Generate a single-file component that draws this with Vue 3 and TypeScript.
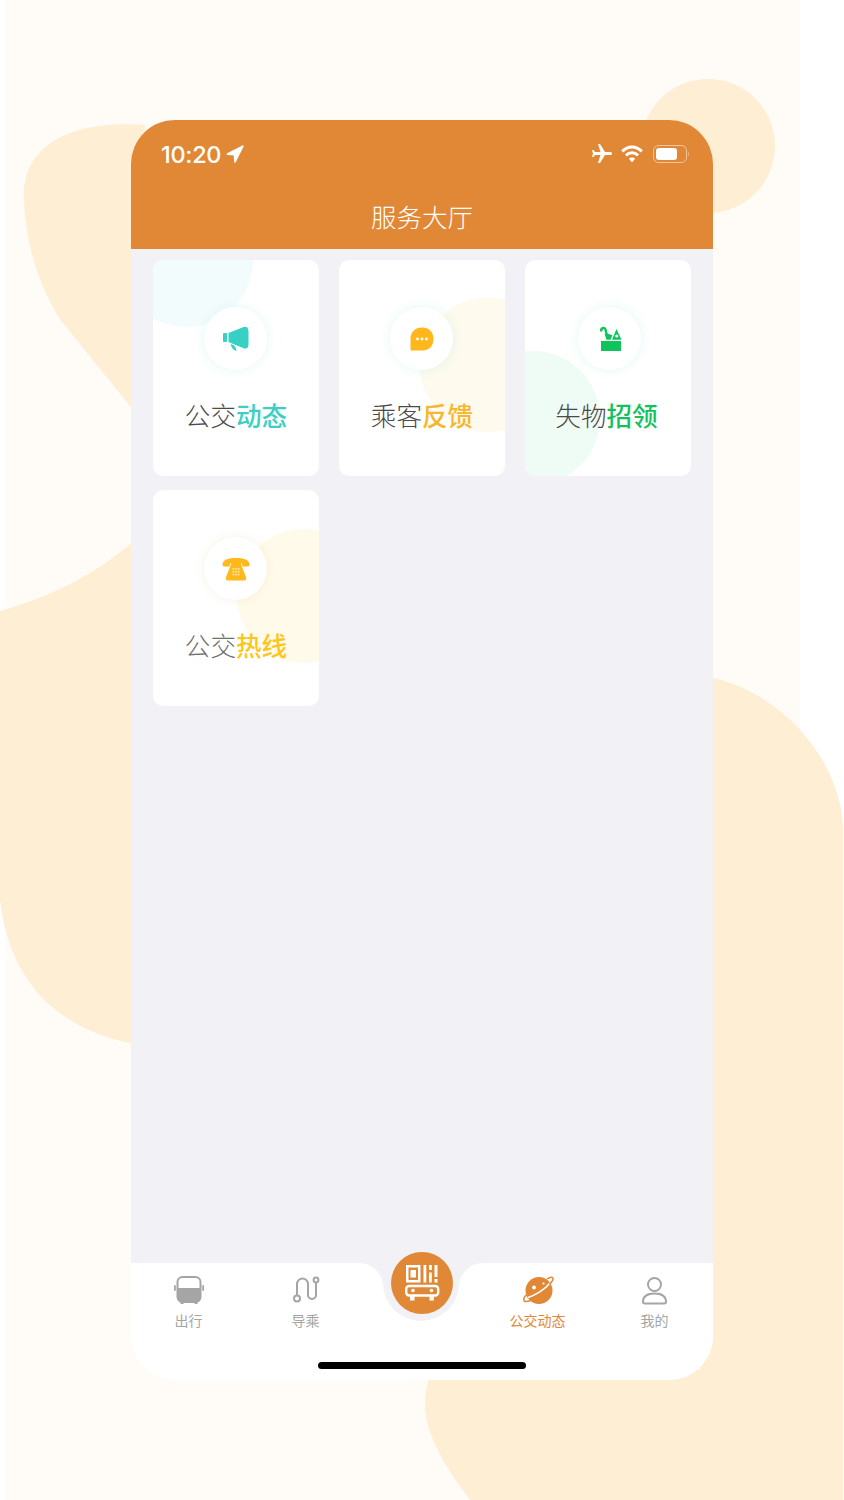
<script setup lang="ts">
interface ServiceCard {
  key: 'news' | 'feedback' | 'lost' | 'hotline'
  lead: string
  accent: string
}

interface TabItem {
  key: 'bus' | 'route' | 'planet' | 'me'
  label: string
  active?: boolean
}

const cards: ServiceCard[] = [
  { key: 'news', lead: '公交', accent: '动态' },
  { key: 'feedback', lead: '乘客', accent: '反馈' },
  { key: 'lost', lead: '失物', accent: '招领' },
  { key: 'hotline', lead: '公交', accent: '热线' },
]

const leftTabs: TabItem[] = [
  { key: 'bus', label: '出行' },
  { key: 'route', label: '导乘' },
]

const rightTabs: TabItem[] = [
  { key: 'planet', label: '公交动态', active: true },
  { key: 'me', label: '我的' },
]
</script>

<template>
  <div class="page">
    <!-- decorative backdrop -->
    <svg class="backdrop" width="844" height="1500" viewBox="0 0 844 1500">
      <rect x="5" y="0" width="795" height="1500" fill="#fffcf8" />
      <circle cx="708" cy="146" r="67" fill="#feeed3" />
      <path
        d="M145 125 C80 120 24 140 24 195 C24 240 40 290 62 322 L135 412 V540 C95 575 50 597 0 611 V900 C10 985 60 1030 135 1044 Z"
        fill="#feeed3"
      />
      <path
        d="M700 675 C790 690 843 770 843 830 V1500 H470 C440 1460 425 1430 425 1405 C425 1390 428 1380 432 1370 L700 1370 Z"
        fill="#feeed3"
      />
    </svg>

    <div class="phone">
      <header class="head">
        <div class="status">
          <div class="status-left">
            <span class="time">10:20</span>
            <svg width="18" height="18" viewBox="0 0 18 18">
              <path d="M16.8 1.2 L1.5 9 L8.5 9.5 L9 16.8 Z" fill="#fff" stroke="#fff" stroke-width="1.8" stroke-linejoin="round" />
            </svg>
          </div>
          <div class="status-right">
            <svg class="plane" width="24" height="24" viewBox="0 0 24 24">
              <path
                d="M21 16v-2l-8-5V3.5a1.5 1.5 0 0 0-3 0V9l-8 5v2l8-2.5V19l-2 1.5V22l3.5-1 3.5 1v-1.5L13 19v-5.5z"
                fill="#fff"
                transform="rotate(90 12 12)"
              />
            </svg>
            <svg width="22" height="18" viewBox="0 0 22 18">
              <path d="M1.2 6.4 C7 0.6 15 0.6 20.8 6.4" fill="none" stroke="#fff" stroke-width="3" />
              <path d="M5 10.4 C8.5 7 13.5 7 17 10.4" fill="none" stroke="#fff" stroke-width="3" />
              <path d="M7.8 13.6 L11 17.6 L14.2 13.6 C12.5 12 9.5 12 7.8 13.6 Z" fill="#fff" />
            </svg>
            <svg class="battery" width="37" height="18" viewBox="0 0 37 18">
              <rect x="0.5" y="0.5" width="33" height="17" rx="5" fill="none" stroke="#f3c79f" />
              <rect x="3" y="3" width="21" height="12" rx="3" fill="#fff" />
              <path d="M35 6.5 Q36.8 9 35 11.5 Z" fill="#f3c79f" />
            </svg>
          </div>
        </div>
        <h1 class="title">服务大厅</h1>
      </header>

      <main class="content">
        <div class="grid">
          <div v-for="card in cards" :key="card.key" class="card" :class="`card--${card.key}`">
            <span class="card-blob"></span>
            <div class="icon-circle">
              <svg v-if="card.key === 'news'" width="30" height="30" viewBox="0 0 30 30">
                <g fill="#36d1c4">
                  <rect x="2" y="9" width="4" height="9" rx="1" />
                  <path d="M7.5 9 L22 3.2 Q27.5 1.5 27.5 8 V20 Q27.5 26 22 24 L7.5 18 Z" />
                  <path d="M9.5 20 L13 21.2 Q15.5 24 15.5 27 Q11 26 9.5 20 Z" />
                </g>
              </svg>
              <svg v-else-if="card.key === 'feedback'" width="30" height="30" viewBox="0 0 30 30">
                <path
                  d="M15 3.5 C22 3.5 26.5 8 26.5 15 C26.5 22 22 26.5 15 26.5 H6.5 Q3 27.5 3.5 24.5 V15 C3.5 8 8 3.5 15 3.5 Z"
                  fill="#ffb71b"
                />
                <g fill="#fff">
                  <circle cx="10.5" cy="15" r="1.4" />
                  <circle cx="15" cy="15" r="1.4" />
                  <circle cx="19.5" cy="15" r="1.4" />
                </g>
              </svg>
              <svg v-else-if="card.key === 'lost'" width="30" height="30" viewBox="0 0 30 30">
                <rect x="6" y="17" width="20" height="10" fill="#10c45c" />
                <path d="M6 7.5 C6 3 10.5 3 10.8 6.5 C10.8 10 12.5 12 16 12" fill="none" stroke="#10c45c" stroke-width="2.4" />
                <path d="M9.5 10 L17.5 11 L15.5 15.8 L11.5 15.8 Z" fill="#10c45c" />
                <path d="M21.5 5 L26.5 15.8 L17 15.8 Z" fill="#10c45c" />
                <circle cx="21.8" cy="12" r="1.6" fill="#fff" />
              </svg>
              <svg v-else width="30" height="30" viewBox="0 0 30 30">
                <g fill="#ffb91d">
                  <path d="M1.5 11 C1.5 5 8 4 15 4 C22 4 28.5 5 28.5 11 Q28.5 12.5 26.5 12.5 H22.5 Q21 12.5 21 11 V9.5 H9 V11 Q9 12.5 7.5 12.5 H3.5 Q1.5 12.5 1.5 11 Z" />
                  <path d="M10.5 9 H19.5 L25 23 Q26 26.5 23 26.5 H7 Q4 26.5 5 23 Z" />
                </g>
                <g fill="#ffe49b">
                  <rect x="11.5" y="14" width="1.8" height="1.8" />
                  <rect x="14.1" y="14" width="1.8" height="1.8" />
                  <rect x="16.7" y="14" width="1.8" height="1.8" />
                  <rect x="11.5" y="16.8" width="1.8" height="1.8" />
                  <rect x="14.1" y="16.8" width="1.8" height="1.8" />
                  <rect x="16.7" y="16.8" width="1.8" height="1.8" />
                  <rect x="11.5" y="19.6" width="1.8" height="1.8" />
                  <rect x="14.1" y="19.6" width="1.8" height="1.8" />
                  <rect x="16.7" y="19.6" width="1.8" height="1.8" />
                </g>
              </svg>
            </div>
            <div class="card-label">
              <span class="lead">{{ card.lead }}</span><span class="accent">{{ card.accent }}</span>
            </div>
          </div>
        </div>
      </main>

      <footer class="tabbar">
        <div class="tabs">
          <div class="tab-side tab-side--left">
            <div v-for="tab in leftTabs" :key="tab.key" class="tab">
              <svg v-if="tab.key === 'bus'" width="32" height="32" viewBox="0 0 32 32">
                <path d="M4.5 14 H27.5 V24 Q27.5 28 23.5 28 H8.5 Q4.5 28 4.5 24 Z" fill="#a5a5a5" />
                <rect x="4.5" y="3" width="23" height="25" rx="5" fill="none" stroke="#a5a5a5" stroke-width="2" />
                <rect x="1" y="11" width="1.8" height="6" rx="0.9" fill="#a5a5a5" />
                <rect x="29.2" y="11" width="1.8" height="6" rx="0.9" fill="#a5a5a5" />
                <rect x="7.5" y="28" width="3" height="2" fill="#a5a5a5" />
                <rect x="21.5" y="28" width="3" height="2" fill="#a5a5a5" />
              </svg>
              <svg v-else width="32" height="32" viewBox="0 0 32 32">
                <g fill="none" stroke="#a5a5a5" stroke-width="2">
                  <circle cx="7" cy="24.5" r="3" />
                  <path d="M7 21.5 V10 a5.5 5.5 0 0 1 11 0 V21 a4 4 0 0 0 8 0 V8.5" />
                  <circle cx="26" cy="6" r="2.4" />
                </g>
              </svg>
              <span class="tab-label">{{ tab.label }}</span>
            </div>
          </div>
          <div class="tab-center">
            <div class="notch">
              <div class="scan">
                <svg width="40" height="40" viewBox="0 0 40 40">
                  <g fill="#fff">
                    <path d="M4 2 H18.5 V19.5 H4 Z M6.5 4.5 V17 H16 V4.5 Z" fill-rule="evenodd" />
                    <rect x="8.5" y="7" width="5.5" height="7.5" />
                    <rect x="21.5" y="2" width="2.8" height="17.5" />
                    <rect x="27" y="2" width="2.8" height="5" />
                    <rect x="27" y="9.5" width="2.8" height="10" />
                    <rect x="32.5" y="2" width="3" height="12" />
                    <rect x="32.5" y="16" width="3" height="3.5" />
                    <rect x="8" y="32" width="4.5" height="5.5" />
                    <rect x="27.5" y="32" width="4.5" height="5.5" />
                    <circle cx="11" cy="27.5" r="1.8" />
                    <circle cx="29.5" cy="27.5" r="1.8" />
                  </g>
                  <rect x="4.2" y="23" width="32" height="9.5" rx="3" fill="none" stroke="#fff" stroke-width="2.4" />
                </svg>
              </div>
            </div>
          </div>
          <div class="tab-side tab-side--right">
            <div v-for="tab in rightTabs" :key="tab.key" class="tab" :class="{ 'tab--active': tab.active }">
              <svg v-if="tab.key === 'planet'" width="32" height="32" viewBox="0 0 32 32">
                <circle cx="17" cy="16.5" r="13.5" fill="#e18837" />
                <path d="M6 23.5 C13 21.5 23 15.5 28 9" fill="none" stroke="#fff" stroke-width="1.6" />
                <path d="M25 5 C28.5 2.5 31.5 2.5 31 5.5 C30.5 7 29 9 27.5 10.5" fill="none" stroke="#e18837" stroke-width="1.5" />
                <path d="M4.5 20.5 C1 24 1 27.5 4 27.5 C6 27.5 9 26.5 11 25.5" fill="none" stroke="#e18837" stroke-width="1.5" />
                <circle cx="12" cy="13.5" r="1.9" fill="#fff" />
                <circle cx="21.5" cy="9.5" r="1.1" fill="#fff" />
              </svg>
              <svg v-else width="32" height="32" viewBox="0 0 32 32">
                <g fill="none" stroke="#a5a5a5" stroke-width="2">
                  <circle cx="15.5" cy="10.5" r="6.5" />
                  <path d="M4 28 Q4 19.5 15.5 19.5 Q27 19.5 27 28 Q27 29.5 25 29.5 H6 Q4 29.5 4 28 Z" />
                </g>
              </svg>
              <span class="tab-label">{{ tab.label }}</span>
            </div>
          </div>
        </div>
        <div class="home-bar"><span class="home-indicator"></span></div>
      </footer>
    </div>
  </div>
</template>

<style>
html,
body {
  margin: 0;
  background: #fff;
}
</style>

<style scoped>
.page {
  position: relative;
  width: 844px;
  height: 1500px;
  padding-top: 120px;
  box-sizing: border-box;
  overflow: hidden;
  font-family: "Noto Sans CJK SC", "Noto Sans", sans-serif;
}

.backdrop {
  position: absolute;
  top: 0;
  left: 0;
}

.phone {
  position: relative;
  width: 582px;
  height: 1260px;
  margin: 0 auto;
  display: flex;
  flex-direction: column;
  border-radius: 44px;
  overflow: hidden;
  background: #f1f1f6;
}

/* Header */
.head {
  height: 129px;
  flex-shrink: 0;
  background: #e18837;
  color: #fff;
  box-sizing: border-box;
  padding: 20px 23px 0 30px;
}

.status {
  display: flex;
  justify-content: space-between;
  align-items: center;
  height: 28px;
}

.status-left {
  display: flex;
  align-items: center;
  gap: 5px;
}

.time {
  font-family: Inter, Roboto, sans-serif;
  font-size: 23.5px;
  font-weight: 500;
  letter-spacing: -0.3px;
}

.status-right {
  display: flex;
  align-items: center;
  gap: 8px;
}

.status-right svg {
  display: block;
}

.plane {
  margin-right: -1px;
}

.battery {
  margin-left: 2px;
}

.title {
  margin: 29px 0 0 -7px;
  padding: 0;
  text-align: center;
  font-size: 25.5px;
  font-weight: 300;
  line-height: 38px;
}

/* Service grid */
.content {
  flex: 1;
  padding: 11px 22px 0;
}

.grid {
  display: grid;
  grid-template-columns: repeat(3, 166px);
  grid-auto-rows: 216px;
  column-gap: 20px;
  row-gap: 14px;
}

.card {
  position: relative;
  display: flex;
  flex-direction: column;
  align-items: center;
  padding-top: 47px;
  box-sizing: border-box;
  background: #fff;
  border-radius: 10px;
  overflow: hidden;
}

.card-blob {
  position: absolute;
  width: 134px;
  height: 134px;
  border-radius: 50%;
}

.card--news .card-blob {
  left: -34px;
  top: -67px;
  background: #f3fcfc;
}

.card--feedback .card-blob {
  left: 81px;
  top: 38px;
  background: #fefaee;
}

.card--lost .card-blob {
  left: -59px;
  top: 91px;
  background: #effbf5;
}

.card--hotline .card-blob {
  left: 84px;
  top: 39px;
  background: #fffaea;
}

.icon-circle {
  position: relative;
  left: -0.5px;
  width: 63px;
  height: 63px;
  display: flex;
  align-items: center;
  justify-content: center;
  border-radius: 50%;
  background: #fff;
  box-shadow: 0 0 12px rgba(54, 209, 196, 0.14);
}

.card--hotline .icon-circle {
  box-shadow: 0 0 10px rgba(220, 190, 120, 0.2);
}

.card--lost .icon-circle {
  left: 1.5px;
}

.card-label {
  position: relative;
  margin-top: 27px;
  font-size: 25.6px;
  line-height: 36px;
  white-space: nowrap;
}

.card--lost .card-label {
  left: -1.5px;
}

.lead {
  color: #4a4a4a;
  font-weight: 300;
}

.card--hotline .lead {
  color: #6f6f6f;
}

.accent {
  font-weight: 500;
}

.card--news .accent {
  color: #3ccfc5;
}

.card--feedback .accent {
  color: #f8b62d;
}

.card--lost .accent {
  color: #14c15d;
}

.card--hotline .accent {
  color: #fdc61d;
}

/* Tab bar */
.tabbar {
  flex-shrink: 0;
  background: linear-gradient(#f1f1f6 0 58px, #fff 58px);
}

.tabs {
  display: flex;
  height: 76px;
}

.tab-side {
  flex: 1;
  display: flex;
  background: #fff;
}

.tab-side--left {
  border-top-right-radius: 24px;
}

.tab-side--right {
  border-top-left-radius: 24px;
}

.tab {
  flex: 0 0 117px;
  display: flex;
  flex-direction: column;
  align-items: center;
  padding-top: 11px;
}

.tab svg {
  display: block;
}

.tab-side--left .tab:first-child {
  margin-left: -1px;
}

.tab-side--right .tab:first-child {
  margin-left: 20px;
}

.tab-label {
  margin-top: 4px;
  font-size: 14px;
  line-height: 20px;
  color: #a5a5a5;
}

.tab--active .tab-label {
  color: #e18837;
}

.tab-center {
  flex: 0 0 76px;
  background: #fff;
}

.notch {
  height: 58px;
  background: #f1f1f6;
  border-radius: 0 0 38px 38px;
}

.scan {
  position: relative;
  top: -11px;
  left: 0.5px;
  width: 62px;
  height: 62px;
  margin: 0 auto;
  display: flex;
  align-items: center;
  justify-content: center;
  border-radius: 50%;
  background: #e18837;
}

.home-bar {
  height: 41px;
  background: #fff;
  display: flex;
  justify-content: center;
  padding-top: 23px;
  box-sizing: border-box;
}

.home-indicator {
  width: 208px;
  height: 7px;
  border-radius: 4px;
  background: #000;
}
</style>
